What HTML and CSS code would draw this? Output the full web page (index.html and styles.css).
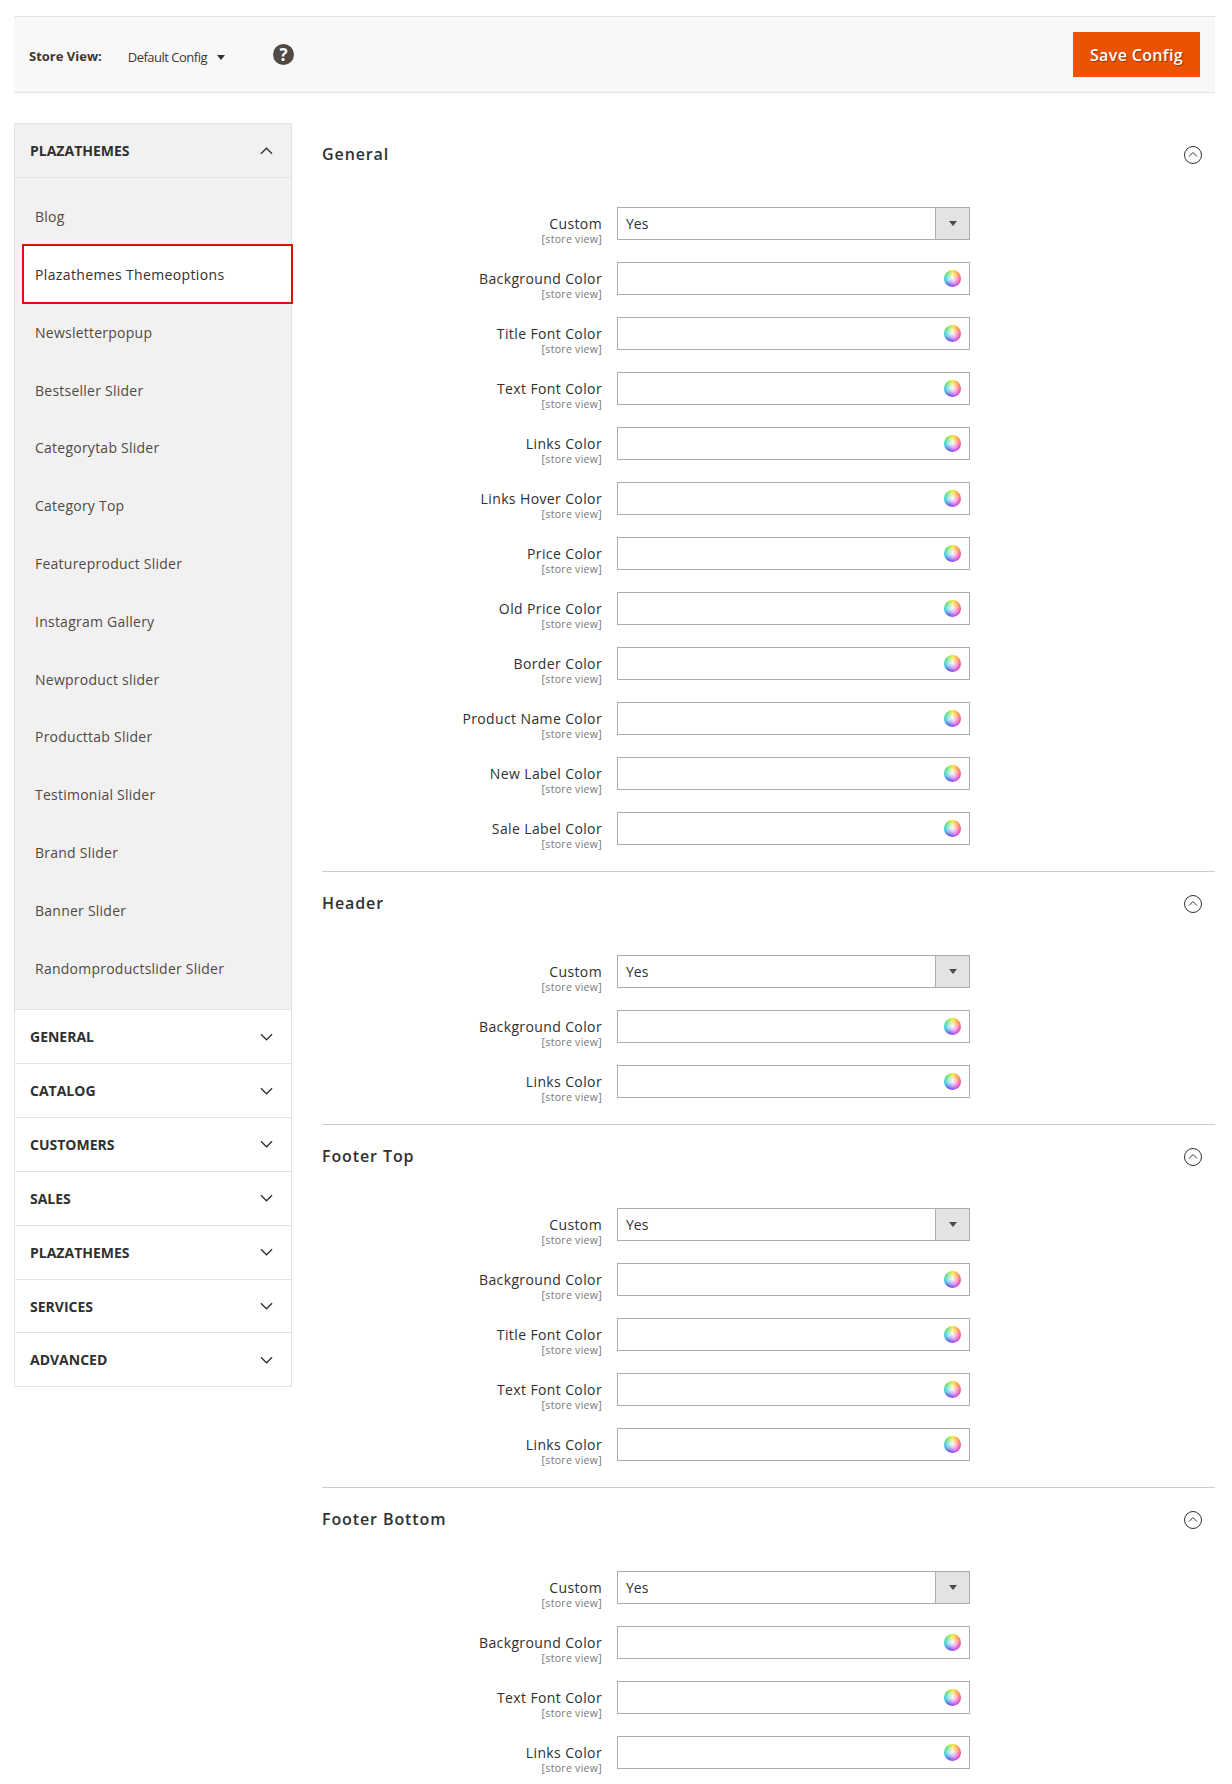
FILE: index.html
```html
<!DOCTYPE html>
<html lang="en">
<head>
<meta charset="utf-8">
<title>Configuration</title>
<link rel="stylesheet" href="styles.css">
</head>
<body>
<div class="page">
  <header class="toolbar">
    <span class="scope-label">Store View:</span>
    <span class="scope-value">Default Config</span>
    <span class="caret"></span>
    <span class="help">?</span>
    <button class="save">Save Config</button>
  </header>
  <div class="layout">
    <aside class="sidebar">
      <div class="tab open"><span>PLAZATHEMES</span><svg class="chev" viewBox="0 0 14 8"><path d="M1 7l6-6 6 6"/></svg></div>
      <ul class="items">
        <li>Blog</li>
        <li class="active">Plazathemes Themeoptions</li>
        <li>Newsletterpopup</li>
        <li>Bestseller Slider</li>
        <li>Categorytab Slider</li>
        <li>Category Top</li>
        <li>Featureproduct Slider</li>
        <li>Instagram Gallery</li>
        <li>Newproduct slider</li>
        <li>Producttab Slider</li>
        <li>Testimonial Slider</li>
        <li>Brand Slider</li>
        <li>Banner Slider</li>
        <li>Randomproductslider Slider</li>
      </ul>
      <div class="tab"><span>GENERAL</span><svg class="chev" viewBox="0 0 14 8"><path d="M1 1l6 6 6-6"/></svg></div>
      <div class="tab"><span>CATALOG</span><svg class="chev" viewBox="0 0 14 8"><path d="M1 1l6 6 6-6"/></svg></div>
      <div class="tab"><span>CUSTOMERS</span><svg class="chev" viewBox="0 0 14 8"><path d="M1 1l6 6 6-6"/></svg></div>
      <div class="tab"><span>SALES</span><svg class="chev" viewBox="0 0 14 8"><path d="M1 1l6 6 6-6"/></svg></div>
      <div class="tab"><span>PLAZATHEMES</span><svg class="chev" viewBox="0 0 14 8"><path d="M1 1l6 6 6-6"/></svg></div>
      <div class="tab"><span>SERVICES</span><svg class="chev" viewBox="0 0 14 8"><path d="M1 1l6 6 6-6"/></svg></div>
      <div class="tab"><span>ADVANCED</span><svg class="chev" viewBox="0 0 14 8"><path d="M1 1l6 6 6-6"/></svg></div>
    </aside>
    <main class="content">
      <section class="group">
        <div class="group-head"><h2>General</h2><svg class="toggle" viewBox="0 0 20 20"><circle cx="10" cy="10" r="8.5"/><path d="M6 11.5l4-4 4 4"/></svg></div>
        <div class="row"><div class="lab">Custom<small>[store view]</small></div><div class="select"><span>Yes</span><i></i></div></div>
        <div class="row"><div class="lab">Background Color<small>[store view]</small></div><div class="input"><b></b></div></div>
        <div class="row"><div class="lab">Title Font Color<small>[store view]</small></div><div class="input"><b></b></div></div>
        <div class="row"><div class="lab">Text Font Color<small>[store view]</small></div><div class="input"><b></b></div></div>
        <div class="row"><div class="lab">Links Color<small>[store view]</small></div><div class="input"><b></b></div></div>
        <div class="row"><div class="lab">Links Hover Color<small>[store view]</small></div><div class="input"><b></b></div></div>
        <div class="row"><div class="lab">Price Color<small>[store view]</small></div><div class="input"><b></b></div></div>
        <div class="row"><div class="lab">Old Price Color<small>[store view]</small></div><div class="input"><b></b></div></div>
        <div class="row"><div class="lab">Border Color<small>[store view]</small></div><div class="input"><b></b></div></div>
        <div class="row"><div class="lab">Product Name Color<small>[store view]</small></div><div class="input"><b></b></div></div>
        <div class="row"><div class="lab">New Label Color<small>[store view]</small></div><div class="input"><b></b></div></div>
        <div class="row"><div class="lab">Sale Label Color<small>[store view]</small></div><div class="input"><b></b></div></div>
      </section>
      <section class="group">
        <div class="group-head"><h2>Header</h2><svg class="toggle" viewBox="0 0 20 20"><circle cx="10" cy="10" r="8.5"/><path d="M6 11.5l4-4 4 4"/></svg></div>
        <div class="row"><div class="lab">Custom<small>[store view]</small></div><div class="select"><span>Yes</span><i></i></div></div>
        <div class="row"><div class="lab">Background Color<small>[store view]</small></div><div class="input"><b></b></div></div>
        <div class="row"><div class="lab">Links Color<small>[store view]</small></div><div class="input"><b></b></div></div>
      </section>
      <section class="group">
        <div class="group-head"><h2>Footer Top</h2><svg class="toggle" viewBox="0 0 20 20"><circle cx="10" cy="10" r="8.5"/><path d="M6 11.5l4-4 4 4"/></svg></div>
        <div class="row"><div class="lab">Custom<small>[store view]</small></div><div class="select"><span>Yes</span><i></i></div></div>
        <div class="row"><div class="lab">Background Color<small>[store view]</small></div><div class="input"><b></b></div></div>
        <div class="row"><div class="lab">Title Font Color<small>[store view]</small></div><div class="input"><b></b></div></div>
        <div class="row"><div class="lab">Text Font Color<small>[store view]</small></div><div class="input"><b></b></div></div>
        <div class="row"><div class="lab">Links Color<small>[store view]</small></div><div class="input"><b></b></div></div>
      </section>
      <section class="group">
        <div class="group-head"><h2>Footer Bottom</h2><svg class="toggle" viewBox="0 0 20 20"><circle cx="10" cy="10" r="8.5"/><path d="M6 11.5l4-4 4 4"/></svg></div>
        <div class="row"><div class="lab">Custom<small>[store view]</small></div><div class="select"><span>Yes</span><i></i></div></div>
        <div class="row"><div class="lab">Background Color<small>[store view]</small></div><div class="input"><b></b></div></div>
        <div class="row"><div class="lab">Text Font Color<small>[store view]</small></div><div class="input"><b></b></div></div>
        <div class="row"><div class="lab">Links Color<small>[store view]</small></div><div class="input"><b></b></div></div>
      </section>
    </main>
  </div>
</div>
</body>
</html>
```
FILE: styles.css
```css
* { box-sizing: border-box; }
html, body { margin: 0; padding: 0; background: #fff; }
body { height: 1784px; overflow: hidden; font-family: "Open Sans", sans-serif; color: #303030; }
.page { padding: 16px 17px 0 14px; }

.toolbar { display: flex; align-items: center; height: 77px; padding: 0 15px; background: #f8f8f8; border-top: 1px solid #e3e3e3; border-bottom: 1px solid #e3e3e3; }
.scope-label { margin-top: 3px; font-size: 13px; font-weight: 700; color: #41362f; }
.scope-value { margin: 4px 0 0 26px; font-size: 13px; letter-spacing: -0.5px; color: #41362f; }
.caret { margin: 6px 0 0 10px; border-top: 5px solid #303030; border-left: 4px solid transparent; border-right: 4px solid transparent; }
.help { display: flex; align-items: center; justify-content: center; width: 21px; height: 21px; margin-left: 48px; border-radius: 50%; background: #514943; color: #fff; font-size: 17px; font-weight: 700; }
.save { margin-left: auto; width: 127px; height: 45px; border: 0; background: #eb5202; color: #fff; font-family: inherit; font-size: 16px; font-weight: 600; letter-spacing: .35px; text-shadow: 1px 1px 1px rgba(0,0,0,.4); }

.layout { display: flex; align-items: flex-start; gap: 30px; margin-top: 30px; }
.sidebar { flex: 0 0 278px; border: 1px solid #e3e3e3; border-bottom: 0; }
.tab { display: flex; align-items: center; justify-content: space-between; height: 53.85px; padding: 0 18px 0 15px; border-bottom: 1px solid #e3e3e3; font-size: 14px; font-weight: 700; }
.tab.open { height: 54px; background: #f1f1f1; }
.chev { width: 13px; height: 8px; fill: none; stroke: #303030; stroke-width: 1.4; }
.items { position: relative; list-style: none; margin: 0; padding: 10px 0 12px; background: #f1f1f1; border-bottom: 1px solid #e3e3e3; }
.items li { height: 57.8px; padding-left: 20px; line-height: 58px; font-size: 14px; letter-spacing: .24px; color: #514943; }
.items li.active { position: relative; height: 60px; margin: -2px -2px 0 7px; padding-left: 11px; background: #fff; border: 2px solid #d9100c; line-height: 58px; letter-spacing: .36px; color: #303030; }

.content { flex: 1; }
.group { border-bottom: 1px solid #ccc; padding-bottom: 26px; }
.group:last-child { border-bottom: 0; }
.group-head { display: flex; align-items: center; justify-content: space-between; height: 64px; margin-bottom: 19px; padding-right: 12px; }
.group:first-child .group-head { margin-bottom: 20px; }
.group-head h2 { margin: -2px 0 0; font-size: 16px; font-weight: 600; letter-spacing: .9px; color: #303030; }
.toggle { width: 20px; height: 20px; fill: none; stroke: #303030; stroke-width: 1; }

.row { display: flex; gap: 14px; height: 33px; margin-bottom: 22px; }
.row:last-child { margin-bottom: 0; }
.lab { width: 280px; margin-right: 1px; text-align: right; font-size: 14px; line-height: 20px; padding-top: 7px; letter-spacing: .38px; white-space: nowrap; }
.lab small { display: block; font-size: 10.5px; line-height: 12px; color: #777; letter-spacing: .3px; margin-top: -1px; }
.input, .select { display: flex; align-items: center; justify-content: space-between; width: 353px; height: 33px; border: 1px solid #adadad; background: #fff; font-size: 14px; }
.select span { padding-left: 8px; }
.select i { position: relative; width: 34px; height: 100%; background: #e3e3e3; border-left: 1px solid #adadad; }
.select i::after { content: ""; position: absolute; left: 13px; top: 13px; border-top: 5px solid #514943; border-left: 4px solid transparent; border-right: 4px solid transparent; }
.input { justify-content: flex-end; padding-right: 8px; }
.input b { width: 17px; height: 17px; border-radius: 50%; background: radial-gradient(circle, rgba(255,255,255,.95) 0, rgba(255,255,255,.55) 35%, rgba(255,255,255,0) 68%), conic-gradient(#f4e52f, #ff8a3c, #f6479a, #c544e6, #5b4be8, #35c3e8, #4fe07a, #f4e52f); }
```
